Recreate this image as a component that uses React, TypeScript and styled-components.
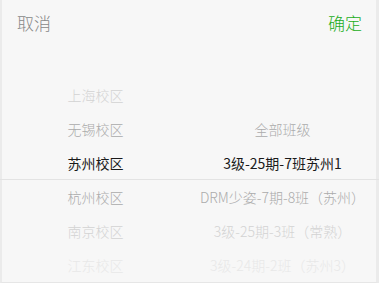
import React from "react";
import styled, { createGlobalStyle } from "styled-components";

const campuses = ["上海校区", "无锡校区", "苏州校区", "杭州校区", "南京校区", "江东校区"];
const classes = [
  "全部班级",
  "3级-25期-7班苏州1",
  "DRM少姿-7期-8班（苏州）",
  "3级-25期-3班（常熟）",
  "3级-24期-2班（苏州3）",
];

// rows shown in the wheel, index 3 is the selected one
const ROWS = 7;
const SELECTED = 3;

const GlobalStyle = createGlobalStyle`
  html, body {
    margin: 0;
    padding: 0;
    background: #f7f7f7;
  }
  body {
    font-family: "Noto Sans CJK SC", "Noto Sans", sans-serif;
  }
`;

const shades = ["#1a1a1a", "#ababab", "#d3d3d3", "#e8e8e8"];

// Picker column
const Column = ({ items, offset }: { items: string[]; offset: number }) => {
  const rows = [];
  for (let i = 0; i < ROWS; i++) {
    const item = items[i - offset];
    const dist = Math.min(Math.abs(i - SELECTED), 3);
    rows.push(
      <Item key={i} $dist={dist}>
        {item ?? ""}
      </Item>
    );
  }
  return <ColumnBox>{rows}</ColumnBox>;
};

export default function App() {
  return (
    <>
      <GlobalStyle />
      <Sheet>
        <Header>
          <Cancel>取消</Cancel>
          <Confirm>确定</Confirm>
        </Header>
        <Body>
          <Column items={campuses} offset={1} />
          <Column items={classes} offset={2} />
          <Indicator />
        </Body>
      </Sheet>
    </>
  );
}

const Sheet = styled.div`
  width: 379px;
  height: 283px;
  box-sizing: border-box;
  background: #f7f7f7;
  border-left: 2px solid #ebebeb;
  border-right: 3px solid #ebebeb;
  border-bottom: 1px solid #e6e6e6;
  display: flex;
  flex-direction: column;
`;

const Header = styled.div`
  height: 44px;
  display: flex;
  align-items: center;
  justify-content: space-between;
  padding: 0 14px 0 15px;
  font-size: 17px;
  font-weight: 300;
`;

const Cancel = styled.span`
  color: #888888;
`;

const Confirm = styled.span`
  color: #1aad19;
`;

const Body = styled.div`
  position: relative;
  display: flex;
  height: 238px;
`;

const ColumnBox = styled.div`
  flex: 1;
  display: flex;
  flex-direction: column;
`;

const Item = styled.div<{ $dist: number }>`
  height: 34px;
  line-height: 34px;
  text-align: center;
  font-size: 14px;
  font-weight: ${(p) => (p.$dist === 0 ? 400 : 300)};
  white-space: nowrap;
  color: ${(p) => shades[p.$dist]};
`;

const Indicator = styled.div`
  position: absolute;
  left: -2px;
  right: -3px;
  top: ${SELECTED * 34}px;
  height: 34px;
  box-sizing: border-box;
  border-bottom: 1px solid #e3e3e3;
  pointer-events: none;
`;
